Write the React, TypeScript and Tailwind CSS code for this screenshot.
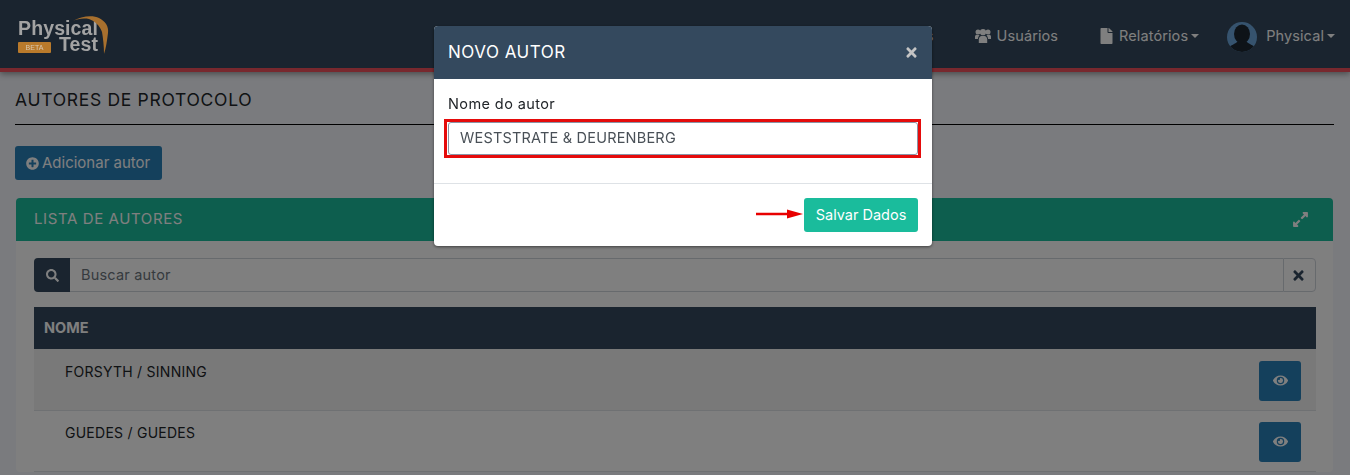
import { FaFile, FaPlusCircle, FaSearch, FaTimes, FaEye, FaExpandAlt } from 'react-icons/fa';

const FONT = "font-['Inter','Liberation_Sans',sans-serif]";

// the logo reads brighter than the rest of the dimmed page, so it sits above the backdrop
function Logo() {
  return (
    <div className="relative z-10 w-[96px] h-[44px] font-['Liberation_Sans',sans-serif] font-bold text-[#a3a3a3]">
      <div className="absolute left-0 top-[6px] w-[81px] text-right text-[19.5px] leading-[16px]">
        Physical
        <br />
        Test
      </div>
      <div className="absolute left-[1px] top-[28px] w-[33px] h-[11px] rounded-[1px] bg-[#b97a2b] text-[#d8c8b0] text-[7px] leading-[11px] text-center font-normal">
        BETA
      </div>
      <svg className="absolute left-[50px] -top-[1px]" width="60" height="44" viewBox="0 0 60 44" fill="none">
        <path d="M6 8 C14 3 26 2 32 5 C38 8 42 13 41 20 C40 28 39 35 37 41 C37 33 36 25 35 19 C33 13 28 8 22 6 C16 5 10 6 6 8 Z" fill="#a8702e" />
      </svg>
    </div>
  );
}

function UsersIcon() {
  return (
    <svg className="mr-[6px]" width="16" height="15" viewBox="0 0 16 15" fill="currentColor">
      <circle cx="3" cy="4" r="2.5" />
      <circle cx="13" cy="4" r="2.5" />
      <path d="M0 11 L0 8.5 C0 7.4 1 6.8 2 6.8 L4.6 7.2 C3.6 8.2 3 9.5 2.9 11 Z" />
      <path d="M16 11 L16 8.5 C16 7.4 15 6.8 14 6.8 L11.4 7.2 C12.4 8.2 13 9.5 13.1 11 Z" />
      <circle cx="8" cy="4.2" r="3.1" />
      <path d="M3.8 15 L3.8 11.5 C3.8 9.2 5.2 8 6.5 8 L9.5 8 C10.8 8 12.2 9.2 12.2 11.5 L12.2 15 Z" />
    </svg>
  );
}

function Avatar() {
  return (
    <svg width="30" height="30" viewBox="0 0 30 30">
      <defs>
        <clipPath id="avatar-clip">
          <circle cx="15" cy="15" r="15" />
        </clipPath>
      </defs>
      <g clipPath="url(#avatar-clip)">
        <rect width="30" height="30" fill="#6ca6dc" />
        <ellipse cx="15" cy="12" rx="8" ry="9.5" fill="#1c2630" />
        <path d="M0 30 L0 27 C3 23 9 22 11 19 L19 19 C21 22 27 23 30 27 L30 30 Z" fill="#1c2630" />
      </g>
    </svg>
  );
}

function Caret() {
  return <span className="ml-[3px] inline-block border-x-[4px] border-t-[4px] border-x-transparent border-t-current" />;
}

function Navbar() {
  return (
    <nav className="h-[72px] shrink-0 flex items-center pl-[17px] pr-[15px] pt-[3px] bg-[#34495e] border-b-[4px] border-[#f0505c] shadow-[0_2px_6px_rgba(0,0,0,0.4)] text-white text-[14.5px] tracking-[0.1px]">
      <Logo />
      <div className="ml-auto flex items-center">
        <span className="mr-[41px]">Protocolos</span>
        <span className="flex items-center mr-[42px]">
          <UsersIcon />
          Usuários
        </span>
        <span className="flex items-center mr-[28px]">
          <FaFile className="w-[13px] h-[16px] mr-[6px]" />
          Relatórios
          <Caret />
        </span>
        <span className="flex items-center">
          <span className="mr-[9px] mt-[3px] flex"><Avatar /></span>
          Physical
          <Caret />
        </span>
      </div>
    </nav>
  );
}

function AuthorRow({ name, striped }: { name: string; striped?: boolean }) {
  return (
    <div className={`flex justify-between pl-[31px] pr-[15px] border-b border-[#dee2e6] text-[14px] tracking-[0.25px] text-[#212529] ${striped ? 'h-[62px] pt-[12px] bg-[#f2f2f2]' : 'h-[61px] pt-[11px] bg-white'}`}>
      <span className="leading-[20px] mt-[1px]">{name}</span>
      <button className="w-[42px] h-[39.5px] rounded-[3px] bg-[#2980b9] text-white flex items-center justify-center">
        <FaEye className="w-[15px] h-[15px]" />
      </button>
    </div>
  );
}

function AuthorsCard() {
  return (
    <section className="mx-[1px] mt-[18px] rounded-[4px] bg-white">
      <header className="h-[43px] flex items-center justify-between pl-[18px] pr-[24px] rounded-t-[4px] bg-[#1abc9c] text-white text-[15px] tracking-[0.6px]">
        LISTA DE AUTORES
        <FaExpandAlt className="w-[17px] h-[17px]" />
      </header>
      <div className="pl-[18px] pr-[17px] pt-[17px]">
        <div className="flex h-[34px] text-[14.5px] tracking-[0.2px]">
          <div className="w-[36px] flex items-center justify-center rounded-l-[4px] bg-[#34495e] text-white">
            <FaSearch className="w-[13px] h-[13px]" />
          </div>
          <div className="flex-1 flex items-center pl-[11px] border-y border-[#ced4da] text-[#6c757d]">Buscar autor</div>
          <div className="w-[33px] flex items-center justify-center pr-[3px] rounded-r-[4px] border border-[#ced4da] text-[#34495e]">
            <FaTimes className="w-[15px] h-[15px]" />
          </div>
        </div>
        <div className="mt-[15px] h-[42px] flex items-center pl-[10px] bg-[#34495e] text-white text-[14.5px] font-bold">NOME</div>
        <AuthorRow name="FORSYTH / SINNING" striped />
        <AuthorRow name="GUEDES / GUEDES" />
      </div>
    </section>
  );
}

function NewAuthorModal() {
  return (
    <div className="fixed inset-0 bg-black/50">
      <div className="w-[498px] ml-[434px] mt-[26px] rounded-[4px] overflow-hidden bg-white text-[#212529] shadow-[0_1px_3px_rgba(0,0,0,0.5)]">
        <div className="h-[53px] flex items-center justify-between pl-[14px] pr-[13px] bg-[#34495e] text-white text-[17px] tracking-[0.5px]">
          NOVO AUTOR
          <FaTimes className="w-[15px] h-[15px] text-[#c4c4c4]" />
        </div>
        <div className="h-[105px] border-b border-[#dee2e6] px-[14px] pt-[15px]">
          <label className="block text-[14.5px] tracking-[0.4px] leading-[20px]">Nome do autor</label>
          <div className="relative mt-[8px] h-[33px] rounded-[3px] border border-[#8a94a6] flex items-center pl-[11px] pb-[2px] text-[14.5px] tracking-[0.2px] text-[#495057]">
            WESTSTRATE &amp; DEURENBERG
            <div className="absolute -left-[5px] -right-[4px] -top-[4px] -bottom-[4px] border-[3px] border-[#e50b0b]" />
          </div>
        </div>
        <div className="h-[62px] flex items-start justify-end pr-[14px] pt-[14px]">
          <svg className="mt-[10px] mr-[1px]" width="47" height="12" viewBox="0 0 47 12">
            <path d="M0 6 H33" stroke="#e80000" strokeWidth="2.5" />
            <path d="M31 1.5 L47 6 L31 10.5 Z" fill="#e80000" />
          </svg>
          <button className="w-[114px] h-[34px] rounded-[3px] bg-[#1abc9c] text-white text-[14.5px]">Salvar Dados</button>
        </div>
      </div>
    </div>
  );
}

export default function App() {
  return (
    <div className={`h-screen overflow-hidden flex flex-col bg-[#f4f6fc] ${FONT}`}>
      <Navbar />
      <main className="pl-[15px] pr-[16px]">
        <h1 className="mt-[17px] text-[17.5px] tracking-[0.7px] leading-[22px] text-[#212529]">AUTORES DE PROTOCOLO</h1>
        <hr className="mt-[13px] border-t border-black" />
        <button className="mt-[21px] w-[147px] h-[34px] flex items-center pl-[11px] rounded-[3px] bg-[#2980b9] text-white text-[15px]">
          <FaPlusCircle className="w-[13px] h-[13px] mr-[3px]" />
          Adicionar autor
        </button>
        <AuthorsCard />
      </main>
      <NewAuthorModal />
    </div>
  );
}
